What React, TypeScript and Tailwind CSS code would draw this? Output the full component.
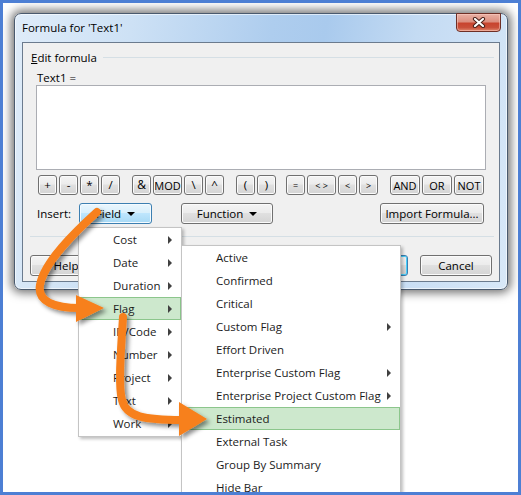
import React from 'react';

type Variant = 'normal' | 'hot' | 'default';

function Btn({ children, className = '', variant = 'normal' }: { children: React.ReactNode; className?: string; variant?: Variant }) {
  const look =
    variant === 'hot'
      ? 'border-[#3c7fb1] bg-[linear-gradient(to_bottom,#eaf6fd_0%,#d9f0fc_45%,#bee6fd_50%,#a7d9f5_100%)] shadow-[inset_0_0_0_1px_#f4fbff]'
      : variant === 'default'
      ? 'border-[#3c7fb1] bg-[linear-gradient(to_bottom,#f2f2f2_0%,#ebebeb_45%,#dddddd_50%,#cfcfcf_100%)] shadow-[inset_0_0_0_1px_#48d0fc]'
      : 'border-[#707070] bg-[linear-gradient(to_bottom,#f4f4f4_0%,#ececec_45%,#e0e0e0_50%,#d4d4d4_100%)] shadow-[inset_0_0_0_1px_#fbfbfb]';
  return (
    <div className={`flex items-center justify-center rounded-[3px] border leading-none text-black ${look} ${className}`}>
      {children}
    </div>
  );
}

function Caret() {
  return <span className="ml-[6px] mt-[1px] h-0 w-0 border-x-[4px] border-t-[4px] border-x-transparent border-t-black" />;
}

function MenuItem({ label, sub, active }: { label: string; sub?: boolean; active?: boolean }) {
  return (
    <div
      className={`flex h-[23px] items-center justify-between border pl-[33px] pr-[8px] ${
        active ? 'border-[#8cc68c] bg-[#cde8cd]' : 'border-transparent'
      }`}
    >
      <span>{label}</span>
      {sub && <span className="h-0 w-0 border-y-[4px] border-l-[4px] border-y-transparent border-l-[#404040]" />}
    </div>
  );
}

const fieldItems = ['Cost', 'Date', 'Duration', 'Flag', 'ID/Code', 'Number', 'Project', 'Text', 'Work'];

const flagItems: { label: string; sub?: boolean }[] = [
  { label: 'Active' },
  { label: 'Confirmed' },
  { label: 'Critical' },
  { label: 'Custom Flag', sub: true },
  { label: 'Effort Driven' },
  { label: 'Enterprise Custom Flag', sub: true },
  { label: 'Enterprise Project Custom Flag', sub: true },
  { label: 'Estimated' },
  { label: 'External Task' },
  { label: 'Group By Summary' },
  { label: 'Hide Bar' },
];

export default function App() {
  return (
    <div className="relative h-[495px] w-[521px] overflow-hidden bg-white pl-[14px] pt-[13px] font-['Open_Sans',sans-serif] text-[11.5px] text-black">
      {/* dialog window */}
      <div className="relative flex h-[277px] w-[494px] flex-col rounded-[7px] border border-[#4a5a6e] bg-[linear-gradient(100deg,#dfecf9_0%,#cde1f5_22%,#aecdee_48%,#a9caed_58%,#c4dbf3_75%,#d8e8f8_100%)] px-[7px] pb-[7px] shadow-[0_0_10px_3px_rgba(0,0,0,0.55),inset_0_0_0_1px_rgba(255,255,255,0.6)]">
        <div className="flex h-[28px] items-center text-black">Formula for 'Text1'</div>

        <div className="absolute right-[6px] top-[-1px] flex h-[19px] w-[45px] items-center justify-center rounded-b-[4px] border border-[#6e2f26] bg-[linear-gradient(to_bottom,#e9b0a4_0%,#dc8f7f_45%,#c8442e_55%,#c9503a_80%,#e08a70_100%)] shadow-[inset_0_0_0_1px_rgba(255,210,200,0.5)]">
          <svg width="14" height="11" viewBox="0 0 14 11">
            <path d="M3 2 L11 9 M11 2 L3 9" stroke="#4a2019" strokeWidth="4.2" strokeLinecap="round" />
            <path d="M3 2 L11 9 M11 2 L3 9" stroke="#ffffff" strokeWidth="2.2" strokeLinecap="round" />
          </svg>
        </div>

        {/* client area */}
        <div className="h-[240px] w-[478px] border border-[#6b7b8e] bg-[#f0f0f0] pl-[8px] pt-[7px]">
          <div className="flex h-[15px] items-center pr-[5px]">
            <span>
              <span className="underline">E</span>dit formula
            </span>
            <div className="ml-[6px] h-px flex-1 bg-[#d5dfe5]" />
          </div>

          <div className="ml-[6px] mt-[5px] flex h-[15px] items-center">Text1 =</div>

          <div className="ml-[5px] h-[85px] w-[450px] border border-[#abadb3] bg-white" />

          {/* operator buttons */}
          <div className="ml-[7px] mt-[5px] flex h-[20px] items-stretch">
            <div className="flex gap-[2px]">
              <Btn className="w-[19px]">+</Btn>
              <Btn className="w-[19px]">-</Btn>
              <Btn className="w-[19px]">*</Btn>
              <Btn className="w-[19px]">/</Btn>
            </div>
            <div className="ml-[12px] flex gap-[2px]">
              <Btn className="w-[19px] text-[12px]">&amp;</Btn>
              <Btn className="w-[29px] text-[11px]">MOD</Btn>
              <Btn className="w-[19px]">\</Btn>
              <Btn className="w-[19px]">^</Btn>
            </div>
            <div className="ml-[12px] flex gap-[2px]">
              <Btn className="w-[19px]">(</Btn>
              <Btn className="w-[19px]">)</Btn>
            </div>
            <div className="ml-[10px] flex gap-[2px]">
              <Btn className="w-[19px] text-[9px]">=</Btn>
              <Btn className="w-[29px] text-[9px]">&lt; &gt;</Btn>
              <Btn className="w-[19px] text-[9px]">&lt;</Btn>
              <Btn className="w-[19px] text-[9px]">&gt;</Btn>
            </div>
            <div className="ml-[12px] flex gap-[2px]">
              <Btn className="w-[30px] text-[11px]">AND</Btn>
              <Btn className="w-[30px] text-[11px]">OR</Btn>
              <Btn className="w-[30px] text-[11px]">NOT</Btn>
            </div>
          </div>

          {/* insert row */}
          <div className="ml-[6px] mt-[8px] flex h-[21px] w-[447px] items-stretch">
            <div className="flex w-[42px] items-center">Insert:</div>
            <Btn variant="hot" className="w-[73px]">
              Field
              <Caret />
            </Btn>
            <Btn className="ml-[29px] w-[92px]">
              Function
              <Caret />
            </Btn>
            <Btn className="ml-auto w-[104px]">Import Formula...</Btn>
          </div>

          <div className="-ml-[1px] mt-[12px] h-px w-[464px] bg-[#d5dfe5]" />

          {/* bottom buttons */}
          <div className="-ml-[1px] mt-[18px] flex h-[21px]">
            <Btn className="w-[72px]">Help</Btn>
            <Btn variant="default" className="ml-[234px] w-[72px]">OK</Btn>
            <Btn className="ml-[12px] w-[72px]">Cancel</Btn>
          </div>
        </div>
      </div>

      {/* Field menu */}
      <div className="absolute left-[78px] top-[227px] w-[104px] border border-[#c4c4c4] bg-white text-[#1b1b1b] shadow-[2px_2px_3px_rgba(0,0,0,0.25)]">
        {fieldItems.map((f) => (
          <MenuItem key={f} label={f} sub active={f === 'Flag'} />
        ))}
        <div className="h-[1px]" />
      </div>

      {/* Flag menu */}
      <div className="absolute left-[181px] top-[245px] h-[270px] w-[220px] border border-[#c4c4c4] bg-white text-[#1b1b1b] shadow-[2px_2px_3px_rgba(0,0,0,0.25)]">
        {flagItems.map((f) => (
          <MenuItem key={f.label} label={f.label} sub={f.sub} active={f.label === 'Estimated'} />
        ))}
      </div>

      {/* callout arrows */}
      <svg className="pointer-events-none absolute left-0 top-0" width="521" height="495" viewBox="0 0 521 495">
        <defs>
          <filter id="drop" x="-30%" y="-30%" width="160%" height="160%">
            <feDropShadow dx="3" dy="3" stdDeviation="2" floodColor="#000" floodOpacity="0.45" />
          </filter>
        </defs>
        <g filter="url(#drop)">
          <path d="M97 212 C75 232 44 262 40 285 C37 302 55 308 80 308" fill="none" stroke="#f7801b" strokeWidth="8" strokeLinecap="round" />
          <polygon points="76,295 104,308 76,322" fill="#f7801b" />
          <path d="M123 317 C121 350 118 385 122 400 C126 417 145 420 182 420" fill="none" stroke="#f7801b" strokeWidth="8" strokeLinecap="round" />
          <polygon points="179,402 207,419 179,436" fill="#f7801b" />
        </g>
      </svg>

      {/* outer frame */}
      <div className="pointer-events-none absolute inset-0 border-[3px] border-[#4d7fd4]" />
    </div>
  );
}
